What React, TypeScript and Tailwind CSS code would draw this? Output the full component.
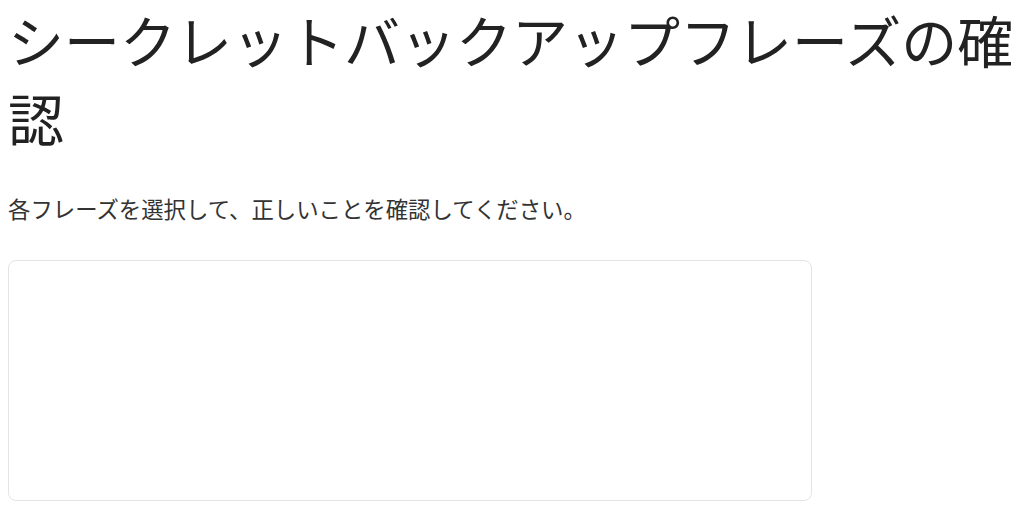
export default function App() {
  return (
    <div
      className="min-h-screen bg-white px-2 text-[#222]"
      style={{ fontFamily: '"Noto Sans CJK JP", "Noto Sans", sans-serif' }}
    >
      <h1 className="m-0 text-[56px] font-normal leading-[78px] text-[#222]">
        シークレットバックアップフレーズの確認
      </h1>
      <p className="mt-[36px] text-[22.4px] leading-[33px] text-[#333]">
        各フレーズを選択して、正しいことを確認してください。
      </p>
      <div className="mt-[35px] h-[241px] w-[804px] rounded-[8px] border border-[#e4e4e4] bg-white" />
    </div>
  );
}
